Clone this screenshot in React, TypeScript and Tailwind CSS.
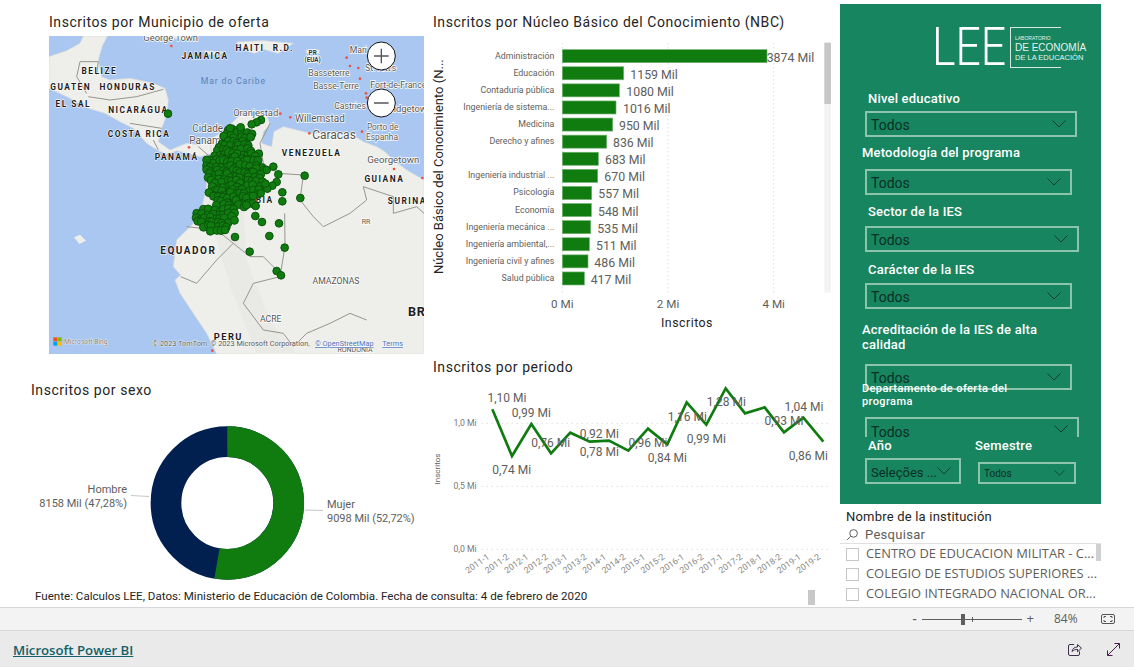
import React from "react"

// bar chart data: label, bar length and value x are in the 3x coords of the chart
const barRows = [
  { label: "Administración", w: 614, vx: 1025, value: "3874 Mil" },
  { label: "Educación", w: 184, vx: 616, value: "1159 Mil" },
  { label: "Contaduría pública", w: 171, vx: 604, value: "1080 Mil" },
  { label: "Ingeniería de sistema...", w: 161, vx: 594, value: "1016 Mil" },
  { label: "Medicina", w: 151, vx: 582, value: "950 Mil" },
  { label: "Derecho y afines", w: 133, vx: 564, value: "836 Mil" },
  { label: "", w: 108, vx: 540, value: "683 Mil" },
  { label: "Ingeniería industrial ...", w: 106, vx: 538, value: "670 Mil" },
  { label: "Psicología", w: 88, vx: 520, value: "557 Mil" },
  { label: "Economía", w: 87, vx: 519, value: "548 Mil" },
  { label: "Ingeniería mecánica ...", w: 85, vx: 517, value: "535 Mil" },
  { label: "Ingeniería ambiental,...", w: 81, vx: 513, value: "511 Mil" },
  { label: "Ingeniería civil y afines", w: 77, vx: 508, value: "486 Mil" },
  { label: "Salud pública", w: 66, vx: 497, value: "417 Mil" },
]

const linePoints = [
  [202, 178], [261, 318], [319, 222], [378, 310], [436, 248], [494, 275],
  [552, 272], [610, 302], [669, 236], [727, 283], [785, 157], [844, 224],
  [902, 115], [960, 190], [1019, 172], [1077, 247], [1135, 203], [1195, 275],
]

const lineLabels = [
  { t: "1,10 Mi", x: 246, y: 157 }, { t: "0,74 Mi", x: 260, y: 373 },
  { t: "0,99 Mi", x: 319, y: 202 }, { t: "0,76 Mi", x: 377, y: 290 },
  { t: "0,92 Mi", x: 523, y: 265 }, { t: "0,78 Mi", x: 523, y: 319 },
  { t: "0,96 Mi", x: 669, y: 290 }, { t: "0,84 Mi", x: 727, y: 335 },
  { t: "1,16 Mi", x: 787, y: 212 }, { t: "0,99 Mi", x: 844, y: 278 },
  { t: "1,28 Mi", x: 904, y: 169 }, { t: "0,93 Mi", x: 1077, y: 226 },
  { t: "1,04 Mi", x: 1137, y: 182 }, { t: "0,86 Mi", x: 1150, y: 329 },
]

const periods = [
  "2011-1", "2011-2", "2012-1", "2012-2", "2013-1", "2013-2", "2014-1", "2014-2", "2015-1",
  "2015-2", "2016-1", "2016-2", "2017-1", "2017-2", "2018-1", "2018-2", "2019-1", "2019-2",
]

// map labels, written in the same 3x coords as the map
const countryLabels = [
  ["JAMAICA", 525, 178], ["HAITI", 660, 153], ["R.D.", 760, 153], ["BELIZE", 208, 223],
  ["GUATEN", 122, 269], ["HONDURAS", 293, 269], ["EL SAL", 130, 320], ["NICARÁGUA", 325, 340],
  ["COSTA RICA", 327, 410], ["PANAMÁ", 440, 481], ["VENEZUELA", 845, 467], ["GUIANA", 1063, 547],
  ["SURINA", 1132, 612], ["COLOMBIA", 650, 609],
] as const

const cityLabels = [
  ["George Town", 422, 122, 28], ["Mari", 985, 158, 26], ["St. Kitt's", 1052, 212, 26],
  ["Basseterre", 897, 227, 26], ["Basse-Terre", 918, 268, 26], ["Fort-de-France", 1105, 265, 26],
  ["Castries", 960, 326, 26], ["Bridgetown", 1135, 335, 28], ["Oranjestad", 677, 349, 28],
  ["Willemstad", 870, 365, 30], ["Cidade", 533, 395, 30], ["Panamá", 533, 431, 30],
  ["Caracas", 912, 416, 36], ["Porto de", 1058, 390, 25], ["Espanha", 1056, 420, 25],
  ["Georgetown", 1090, 490, 29],
] as const

const redDots = [
  [424, 138], [950, 173], [960, 198], [985, 204], [990, 236], [1008, 280], [1010, 293], [751, 341],
  [781, 352], [838, 400], [996, 395], [477, 442], [1092, 507], [1177, 534], [547, 1052],
]

const outliers = [
  [414, 341], [824, 527], [745, 523], [730, 500], [757, 577], [757, 604], [811, 594], [696, 666],
  [747, 670], [718, 708], [764, 743], [659, 755], [615, 711], [740, 813], [753, 826], [693, 360],
  [680, 367], [665, 373], [740, 546], [727, 557], [712, 566], [706, 551], [677, 618], [676, 648],
  [692, 580], [632, 382], [600, 385], [710, 510],
]

// y, x from, x to of the mass of municipios
const spread = [
  [390, 595, 650], [402, 590, 668], [414, 585, 672], [426, 580, 668], [438, 570, 672],
  [450, 560, 675], [462, 550, 685], [474, 545, 690], [486, 535, 698], [498, 530, 705],
  [510, 530, 708], [522, 537, 700], [534, 540, 695], [546, 545, 695], [558, 550, 695],
  [570, 550, 690], [582, 542, 680], [594, 550, 670], [606, 562, 668], [618, 565, 665],
  [630, 525, 620], [642, 505, 615], [654, 497, 612], [666, 505, 610], [678, 515, 600],
  [690, 545, 600],
]

function makeDots() {
  const dots: number[][] = []
  let seed = 7
  const next = () => {
    seed = (seed * 9301 + 49297) % 233280
    return seed / 233280
  }
  spread.forEach(([y, from, to]) => {
    for (let x = from; x <= to; x += 15) {
      dots.push([x + next() * 12 - 6, y + next() * 12 - 6])
    }
  })
  return dots
}

function MapVisual() {
  const dots = makeDots()
  return (
    <svg width="375" height="318" viewBox="57 108 1125 954" className="block">
      <rect x="57" y="108" width="1125" height="954" fill="#a9c7f0" />
      <g fill="#eeeeeb" stroke="#dcdcd8" strokeWidth="2">
        <path d="M57,170 L110,152 L150,130 L160,108 L232,108 L216,140 L205,180 L215,230 L240,240 L300,235 L370,250 L405,265 L415,300 L410,345 L395,385 L385,425 L420,450 L470,430 L510,435 L540,420 L545,460 L510,470 L470,458 L440,452 L410,462 L385,452 L350,430 L310,385 L270,365 L225,340 L175,325 L120,295 L57,265 Z" />
        <path d="M540,420 L590,385 L625,350 L680,335 L710,345 L720,375 L700,395 L695,430 L725,440 L732,395 L760,380 L800,390 L840,400 L900,395 L960,400 L1000,425 L1040,440 L1065,455 L1090,480 L1130,510 L1182,540 L1182,1062 L560,1062 L530,1000 L490,940 L450,880 L435,840 L452,825 L430,800 L440,720 L480,680 L510,650 L530,560 L530,500 L545,460 Z" />
        <path d="M345,108 L505,108 L470,118 L400,114 Z" />
        <path d="M620,126 L700,122 L790,130 L745,160 L700,148 L675,160 L640,150 Z" />
        <path d="M520,152 L585,156 L560,165 L530,162 Z" />
        <path d="M828,150 L868,150 L868,160 L830,160 Z" />
      </g>
      <path d="M540,470 L520,640 L560,720 L600,860 L680,1062 L800,1062 L720,960 L650,780 L640,620 L670,440 L640,360 L600,420 Z" fill="#e9e9e5" />
      <path d="M132,712 L150,704 L168,722 L148,732 Z" fill="#eeeeeb" />
      <g fill="none" stroke="#96968f" strokeWidth="3">
        <path d="M150,185 L205,185 L200,225 M150,185 L140,230 L170,280 M175,290 L240,300 L320,290 L400,268 M300,370 L395,385 M370,420 L385,450 M505,440 L540,470" />
        <path d="M470,680 L560,690 L610,730 L660,770 L700,770 L740,810" />
        <path d="M764,640 L765,740 L750,830 L670,850 L640,910 L700,990 L760,1000 L790,1040 L830,1000 L900,970 L960,940 L1010,960" />
        <path d="M720,370 L690,430 L700,490 L745,520 L820,525 L810,600 L850,650 L880,680 L960,640 L1010,600 L1000,560 L1090,590 L1090,640 L1160,620 L1182,640" />
        <path d="M452,830 L500,850 L560,780 L610,730" />
      </g>
      <g fill="#e8544a">
        {redDots.map(([x, y], i) => (
          <circle key={i} cx={x} cy={y} r="4" />
        ))}
      </g>
      <g fontFamily="Roboto, sans-serif" fill="#555" stroke="#fff" strokeWidth="4" paintOrder="stroke">
        {cityLabels.map(([t, x, y, size]) => (
          <text key={t} x={x} y={y} fontSize={size} textAnchor="middle">{t}</text>
        ))}
        <text x="848" y="165" fontSize="19" fontWeight="700" textAnchor="middle" fill="#333">PR</text>
        <text x="848" y="187" fontSize="19" fontWeight="700" textAnchor="middle" fill="#333">(EUA)</text>
        <text x="1008" y="673" fontSize="21" textAnchor="middle">RR</text>
        <text x="918" y="853" fontSize="26" textAnchor="middle">AMAZONAS</text>
        <text x="722" y="965" fontSize="26" textAnchor="middle">ACRE</text>
        <text x="975" y="1056" fontSize="21" textAnchor="middle">RONDONIA</text>
      </g>
      <g fontFamily="Roboto, sans-serif" fill="#1c1c1c" fontWeight="700" fontSize="25" letterSpacing="4.5" textAnchor="middle" stroke="#fff" strokeWidth="3" paintOrder="stroke">
        {countryLabels.map(([t, x, y]) => (
          <text key={t} x={x} y={y}>{t}</text>
        ))}
        <text x="475" y="762" fontSize="30">EQUADOR</text>
        <text x="595" y="1020" fontSize="28">PERU</text>
        <text x="1160" y="948" fontSize="38" letterSpacing="2">BR</text>
      </g>
      <text x="610" y="251" fontFamily="Roboto, sans-serif" fontSize="26" letterSpacing="2.5" fill="#5b7fb8" textAnchor="middle">Mar do Caribe</text>

      <g fill="#107c10" stroke="#0a540a" strokeWidth="3">
        {dots.map(([x, y], i) => (
          <circle key={i} cx={x} cy={y} r="12" />
        ))}
        {outliers.map(([x, y], i) => (
          <circle key={i} cx={x} cy={y} r="11.5" />
        ))}
      </g>

      <g fill="#fff" stroke="#111" strokeWidth="3">
        <circle cx="1054" cy="168" r="42" />
        <circle cx="1054" cy="309" r="42" />
      </g>
      <path d="M1032,168 H1076 M1054,146 V190 M1032,309 H1076" stroke="#555" strokeWidth="4" fill="none" />

      <rect x="70" y="1012" width="12" height="12" fill="#f25022" />
      <rect x="83" y="1012" width="12" height="12" fill="#7fba00" />
      <rect x="70" y="1025" width="12" height="12" fill="#00a4ef" />
      <rect x="83" y="1025" width="12" height="12" fill="#ffb900" />
      <g fontFamily="Roboto, sans-serif" fontSize="22" stroke="#fff" strokeWidth="2" paintOrder="stroke">
        <text x="102" y="1031" fontSize="20" fill="#777">Microsoft Bing</text>
        <text x="367" y="1038" fill="#555">© 2023 TomTom, © 2023 Microsoft Corporation,</text>
        <text x="855" y="1038" fill="#4a6fb5" textDecoration="underline">© OpenStreetMap</text>
        <text x="1057" y="1038" fill="#4a6fb5" textDecoration="underline">Terms</text>
      </g>
    </svg>
  )
}

function BarChart() {
  return (
    <svg width="415" height="304" viewBox="0 108 1245 912" className="block" fontFamily="Roboto, sans-serif">
      {[412, 729, 1046].map((x) => (
        <line key={x} x1={x} x2={x} y1="130" y2="878" stroke="#d0d0d0" strokeWidth="3" strokeDasharray="3 9" />
      ))}
      {barRows.map((r, i) => {
        const top = 148 + i * 51.3
        return (
          <g key={i}>
            <text x="388" y={top + 28} fontSize="26.5" textAnchor="end" fill="#605e5c">{r.label}</text>
            <rect x="412" y={top + 1} width={r.w} height="39" fill="#107c10" stroke="#6fb06f" strokeWidth="2" />
            <text x={r.vx} y={top + 37} fontSize="37" fill="#605e5c">{r.value}</text>
          </g>
        )
      })}
      <text transform="translate(54 500) rotate(-90)" fontSize="39" textAnchor="middle" fill="#252423">Núcleo Básico del Conocimiento (N...</text>
      <g fontSize="35" fill="#605e5c" textAnchor="middle">
        <text x="412" y="923">0 Mi</text>
        <text x="729" y="923">2 Mi</text>
        <text x="1046" y="923">4 Mi</text>
      </g>
      <text x="786" y="980" fontSize="37" letterSpacing="1.5" textAnchor="middle" fill="#252423">Inscritos</text>
      <rect x="1198" y="128" width="20" height="750" fill="#f3f3f3" />
      <rect x="1198" y="128" width="20" height="184" fill="#c6c6c6" />
    </svg>
  )
}

function LineChart() {
  const pts = linePoints.map((p) => p.join(",")).join(" ")
  return (
    <svg width="415" height="210" viewBox="0 90 1245 630" className="block" fontFamily="Roboto, sans-serif">
      {[220, 409, 598].map((y) => (
        <line key={y} x1="170" x2="1215" y1={y} y2={y} stroke="#d0d0d0" strokeWidth="3" strokeDasharray="3 12" />
      ))}
      <g fontSize="26" fill="#777" textAnchor="end">
        <text x="155" y="229">1,0 Mi</text>
        <text x="155" y="418">0,5 Mi</text>
        <text x="155" y="607">0,0 Mi</text>
      </g>
      <text transform="translate(45 357) rotate(-90)" fontSize="24" textAnchor="middle" fill="#605e5c">Inscritos</text>
      <polyline points={pts} fill="none" stroke="#107c10" strokeWidth="8" strokeLinejoin="miter" />
      <g fontSize="36" fill="#605e5c" textAnchor="middle">
        {lineLabels.map((l) => (
          <text key={l.t + l.x} x={l.x} y={l.y}>{l.t}</text>
        ))}
      </g>
      <g fontSize="26" fill="#8a8886" textAnchor="end">
        {periods.map((p, i) => {
          const x = 195 + i * 58.4
          return (
            <text key={p} transform={`translate(${x} 625) rotate(-35)`}>{p}</text>
          )
        })}
      </g>
    </svg>
  )
}

function Donut() {
  // real px here, viewBox starts where the svg sits on the page
  return (
    <svg width="425" height="187" viewBox="0 400 425 187" className="block mt-[1px]" fontFamily="Roboto, sans-serif">
      <circle cx="227.3" cy="503" r="61.3" fill="none" stroke="#012050" strokeWidth="30.7" />
      <path
        d="M227.3,441.7 A61.3,61.3 0 1 1 217,563.4"
        fill="none"
        stroke="#107c10"
        strokeWidth="30.7"
      />
      <path d="M131,495.5 L149,496.5 M305,510 L323,510.5" stroke="#c8c6c4" strokeWidth="1" fill="none" />
      <g fontSize="11" fill="#605e5c">
        <text x="127" y="493" textAnchor="end">Hombre</text>
        <text x="127" y="507" textAnchor="end">8158 Mil (47,28%)</text>
        <text x="327" y="508">Mujer</text>
        <text x="327" y="522">9098 Mil (52,72%)</text>
      </g>
    </svg>
  )
}

function Chevron({ small }: { small?: boolean }) {
  return (
    <svg width={small ? 11 : 14} height={small ? 6 : 8} viewBox="0 0 14 8" className="shrink-0">
      <path d="M0.5,0.5 L7,7 L13.5,0.5" fill="none" stroke="#0d3d2c" strokeWidth="1" />
    </svg>
  )
}

function Dropdown({ width, text = "Todos", small, clip, tight }: { width: string; text?: string; small?: boolean; clip?: boolean; tight?: boolean }) {
  return (
    <div
      className={`${width} ${clip ? "h-[20px] border-b-0 items-start overflow-hidden" : small ? "h-[22px] items-center" : "h-[26px] items-center"} flex justify-between border-2 border-[#8cc4ae] pl-[4px] pr-[9px] text-[#0b2f24] ${small ? "text-[10px]" : tight ? "text-[13px]" : "text-[14px]"}`}
    >
      <span className={`whitespace-nowrap ${small ? "" : "pt-[3px]"}`}>{text}</span>
      <div className={clip ? "pt-[6px]" : ""}><Chevron small={small} /></div>
    </div>
  )
}

function SlicerLabel({ children, className = "" }: { children: React.ReactNode; className?: string }) {
  return <div className={`text-[13px] leading-[15px] font-medium tracking-[0.2px] text-white ${className}`}>{children}</div>
}

function SidePanel() {
  return (
    <div className="w-[261px] h-[500px] mt-[4px] bg-[#17855f] pl-[25px] overflow-hidden">
      <div className="flex items-center ml-[67px] mt-[23px] h-[41px]">
        <div className="text-[53px] leading-[41px] font-light text-white w-[78px] scale-x-[0.84] origin-left">LEE</div>
        <div className="relative h-[41px] w-[51px] border border-[#d5e9e1] border-r-0 pl-[4px] pt-[7px] text-[#e6f3ee] font-['Liberation_Sans',sans-serif] whitespace-nowrap">
          <div className="text-[5px] leading-[7px]">LABORATORIO</div>
          <div className="text-[10px] leading-[11px]">DE ECONOMÍA</div>
          <div className="text-[7.5px] leading-[9px]">DE LA EDUCACIÓN</div>
        </div>
      </div>

      <SlicerLabel className="ml-[3px] mt-[23px]">Nivel educativo</SlicerLabel>
      <div className="mt-[5px]"><Dropdown width="w-[212px]" /></div>
      <SlicerLabel className="-ml-[3px] mt-[8px]">Metodología del programa</SlicerLabel>
      <div className="mt-[9px]"><Dropdown width="w-[207px]" /></div>
      <SlicerLabel className="ml-[3px] mt-[9px]">Sector de la IES</SlicerLabel>
      <div className="mt-[7px]"><Dropdown width="w-[214px]" /></div>
      <SlicerLabel className="ml-[3px] mt-[10px]">Carácter de la IES</SlicerLabel>
      <div className="mt-[6px]"><Dropdown width="w-[207px]" /></div>
      <SlicerLabel className="-ml-[3px] mt-[13px] w-[190px]">Acreditación de la IES de alta calidad</SlicerLabel>
      <div className="mt-[12px]"><Dropdown width="w-[207px]" /></div>
      <div className="relative -ml-[3px] -mt-[8px] w-[170px] text-[11px] leading-[13px] font-medium tracking-[0.4px] text-white">Departamento de oferta del programa</div>
      <div className="mt-[9px]"><Dropdown width="w-[214px]" clip /></div>
      <div className="flex mt-[1px]">
        <div className="w-[113px]">
          <SlicerLabel className="ml-[3px]">Año</SlicerLabel>
          <div className="mt-[5px]"><Dropdown width="w-[96px]" text="Seleções ..." tight /></div>
        </div>
        <div>
          <SlicerLabel className="-ml-[3px]">Semestre</SlicerLabel>
          <div className="mt-[9px]"><Dropdown width="w-[98px]" small /></div>
        </div>
      </div>
    </div>
  )
}

function InstitutionRow({ name, thumb }: { name: string; thumb?: boolean }) {
  return (
    <div className="relative flex items-center h-[20px] pl-[6px] text-[12.9px] text-[#605e5c] font-['Open_Sans',sans-serif]">
      <div className="w-[13px] h-[13px] border border-[#c8c6c4] mr-[7px] shrink-0" />
      <span className="whitespace-nowrap">{name}</span>
      {thumb && <div className="absolute left-[256px] top-0 w-[5px] h-[17px] bg-[#d0d0d0]" />}
    </div>
  )
}

function InstitutionList() {
  return (
    <div className="w-[261px] pt-[5px]">
      <div className="pl-[6px] text-[13px] leading-[16px] text-[#252423] tracking-[0.2px]">Nombre de la institución</div>
      <div className="flex items-center gap-[6px] pl-[6px] h-[18px] mt-[1px] border-b border-[#e0e0e0] text-[13px] text-[#605e5c] tracking-[0.3px]">
        <svg width="13" height="13" viewBox="0 0 24 24" fill="none" stroke="#444" strokeWidth="1.6" className="-scale-x-100">
          <circle cx="10" cy="10" r="7" />
          <path d="M15.5,15.5 L22,22" />
        </svg>
        <span>Pesquisar</span>
      </div>
      <div>
        <InstitutionRow name="CENTRO DE EDUCACION MILITAR - C..." thumb />
        <InstitutionRow name="COLEGIO DE ESTUDIOS SUPERIORES ..." />
        <InstitutionRow name="COLEGIO INTEGRADO NACIONAL OR..." />
      </div>
    </div>
  )
}

function ZoomBar() {
  return (
    <div className="h-[24px] bg-[#f3f3f3] border-y border-[#d8d8d8] flex items-center justify-end text-[#605e5c] font-['Open_Sans',sans-serif]">
      <span className="text-[13px] font-semibold mr-[5px]">-</span>
      <div className="relative w-[100px] h-[1px] bg-[#605e5c]">
        <div className="absolute left-[39px] -top-[5px] w-[4px] h-[11px] bg-[#605e5c]" />
        <div className="absolute left-[50px] -top-[2px] w-[1px] h-[5px] bg-[#605e5c]" />
      </div>
      <span className="text-[13px] ml-[5px] mr-[20px]">+</span>
      <span className="text-[12px] w-[24px] mr-[23px]">84%</span>
      <svg width="14" height="10" viewBox="0 0 14 10" fill="none" stroke="#555" className="mr-[19px]">
        <rect x="0.5" y="0.5" width="13" height="9" rx="1.5" />
        <path d="M3,4 V2.5 H5 M9,2.5 H11 V4 M3,6 V7.5 H5 M9,7.5 H11 V6" />
      </svg>
    </div>
  )
}

function FooterBar() {
  return (
    <div className="h-[36px] bg-[#eaeaea] flex items-center justify-between pl-[13px] pr-[14px]">
      <a className="text-[13.2px] pt-[4px] font-semibold underline text-[#11606a] font-['Open_Sans',sans-serif]">Microsoft Power BI</a>
      <div className="flex items-center gap-[25px]">
        <svg width="14" height="14" viewBox="0 0 14 14" fill="none" stroke="#3b2f4a" strokeWidth="1">
          <path d="M6,2.5 H2 Q0.5,2.5 0.5,4 V12 Q0.5,13.5 2,13.5 H10 Q11.5,13.5 11.5,12 V9.5" />
          <path d="M4,9.5 C4.5,6.5 6.5,5 9.5,5 V2.5 L13.5,6.2 L9.5,9.8 V7.4 C7.5,7.4 5.5,8 4,9.5 Z" />
        </svg>
        <svg width="13" height="13" viewBox="0 0 13 13" fill="none" stroke="#4a1b4a" strokeWidth="1">
          <path d="M0.8,12.2 L12.2,0.8 M7.5,0.5 H12.5 V5.5 M0.5,7.5 V12.5 H5.5" />
        </svg>
      </div>
    </div>
  )
}

function Title({ children, className = "" }: { children: React.ReactNode; className?: string }) {
  return <h2 className={`text-[14px] leading-[18px] tracking-[0.55px] text-[#252423] ${className}`}>{children}</h2>
}

export default function App() {
  return (
    <div className="w-[1134px] h-[667px] flex flex-col bg-white overflow-hidden font-['Roboto',sans-serif]">
      <div className="flex h-[607px]">
        <div className="w-[840px] flex flex-col">
          <div className="flex h-[358px]">
            <div className="w-[425px] pt-[13px]">
              <Title className="pl-[49px]">Inscritos por Municipio de oferta</Title>
              <div className="ml-[49px] mt-[5px]">
                <MapVisual />
              </div>
            </div>
            <div className="w-[415px] pt-[13px]">
              <Title className="pl-[8px]">Inscritos por Núcleo Básico del Conocimiento (NBC)</Title>
              <div className="mt-[5px]">
                <BarChart />
              </div>
            </div>
          </div>
          <div className="flex h-[229px]">
            <div className="w-[425px] pt-[23px]">
              <Title className="pl-[31px]">Inscritos por sexo</Title>
              <Donut />
            </div>
            <div className="w-[415px]">
              <Title className="pl-[8px]">Inscritos por periodo</Title>
              <div className="mt-[4px]">
                <LineChart />
              </div>
            </div>
          </div>
          <div className="h-[20px] flex items-center justify-between pl-[35px] pr-[25px]">
            <span className="text-[11.6px] text-[#252423]">Fuente: Calculos LEE, Datos: Ministerio de Educación de Colombia. Fecha de consulta: 4 de febrero de 2020</span>
            <div className="w-[7px] h-[15px] bg-[#c8c8c8]" />
          </div>
        </div>
        <div className="w-[294px]">
          <SidePanel />
          <InstitutionList />
        </div>
      </div>
      <ZoomBar />
      <FooterBar />
    </div>
  )
}
